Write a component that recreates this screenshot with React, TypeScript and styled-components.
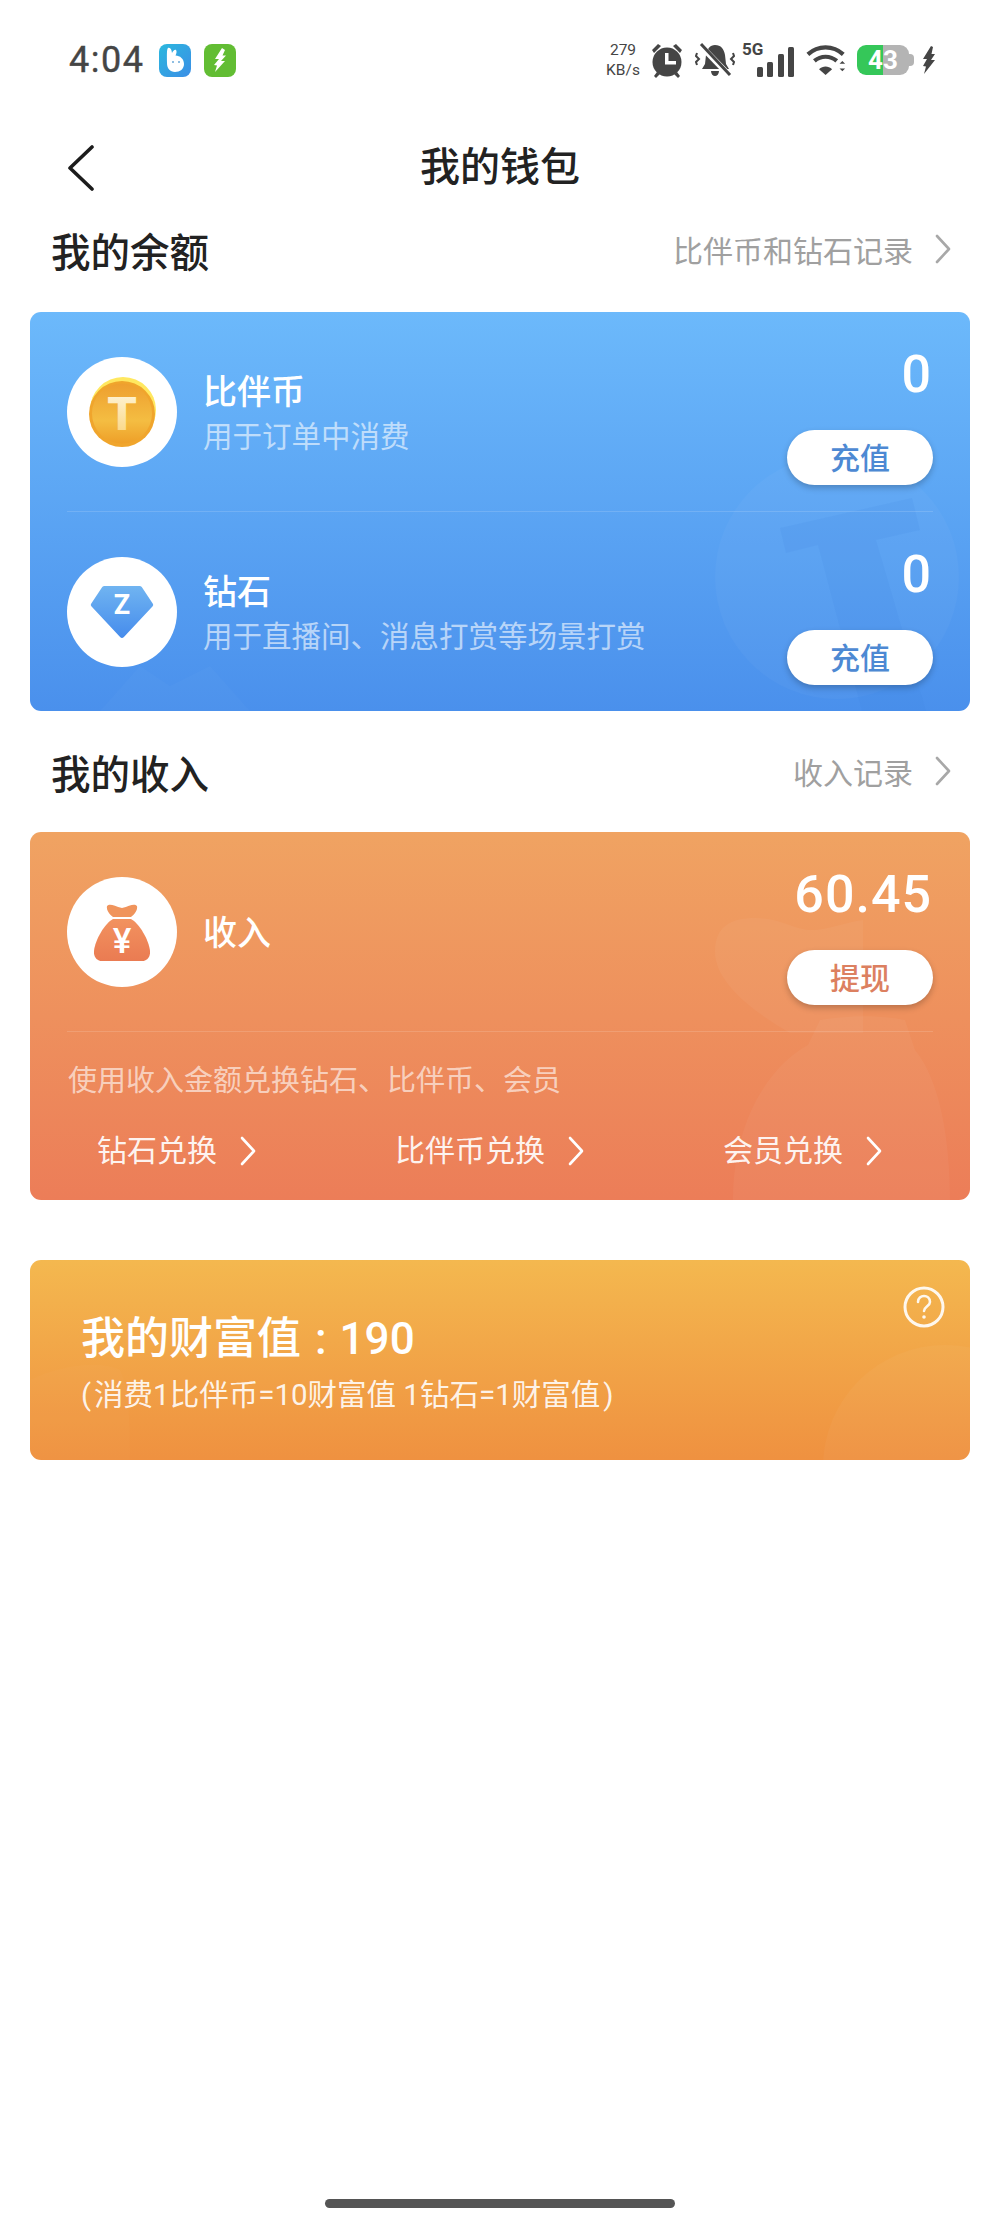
import React from "react";
import styled, { createGlobalStyle } from "styled-components";

const GlobalStyle = createGlobalStyle`
  html, body {
    margin: 0;
    background: #fff;
    font-family: "Roboto", "Noto Sans CJK SC", sans-serif;
  }
  * { box-sizing: border-box; }
`;

const Page = styled.div`
  width: 1000px;
  height: 2225px;
  display: flex;
  flex-direction: column;
  background: #fff;
  overflow: hidden;
`;

const StatusBar = styled.div`
  height: 120px;
  padding: 0 64px 0 69px;
  display: flex;
  align-items: center;
  color: #454545;
`;

const Time = styled.span`
  font-size: 36px;
  letter-spacing: 1.5px;
  margin-right: 15px;
  -webkit-text-stroke: 0.4px #454545;
`;

const AppBadge = styled.span<{ $bg: string }>`
  width: 32px;
  height: 33px;
  border-radius: 8px;
  background: ${(p) => p.$bg};
  margin-right: 13px;
  display: flex;
  align-items: center;
  justify-content: center;
`;

const StatusRight = styled.div`
  margin-left: auto;
  display: flex;
  align-items: center;
`;

const Speed = styled.div`
  font-size: 15.5px;
  line-height: 20px;
  text-align: center;
  width: 36px;
  margin-right: 10px;
  white-space: nowrap;
`;

const Alarm = styled.svg`
  margin-right: 12px;
`;

const Signal = styled.div`
  position: relative;
  width: 52px;
  height: 36px;
  margin-left: 7px;
  margin-right: 12px;
`;

const FiveG = styled.span`
  position: absolute;
  left: 0;
  top: -1px;
  font-size: 17px;
  font-weight: 700;
  line-height: 17px;
`;

const Battery = styled.div`
  position: relative;
  width: 52px;
  height: 30px;
  margin-left: 10px;
  margin-right: 13px;
  border-radius: 9px;
  background: linear-gradient(90deg, #35c759 0 50%, #b4b4b4 50%);
  color: #fff;
  font-size: 26px;
  font-weight: 700;
  line-height: 30px;
  text-align: center;

  &::after {
    content: "";
    position: absolute;
    right: -5px;
    top: 9px;
    width: 5px;
    height: 12px;
    border-radius: 0 4px 4px 0;
    background: #b4b4b4;
  }
`;

const NavBar = styled.div`
  height: 96px;
  padding-left: 67px;
  display: flex;
  align-items: center;
  position: relative;
`;

const NavTitle = styled.h1`
  position: absolute;
  left: 0;
  right: 0;
  top: 20px;
  margin: 0;
  text-align: center;
  font-size: 40px;
  font-weight: 500;
  line-height: 56px;
  color: #222;
`;

const SectionHead = styled.div`
  height: 66px;
  padding: 0 49px 0 51px;
  display: flex;
  align-items: center;
  justify-content: space-between;
`;

const SectionTitle = styled.h2`
  margin: 0;
  font-size: 39.5px;
  font-weight: 500;
  color: #222;
`;

const SectionLink = styled.div`
  display: flex;
  align-items: center;
  gap: 22px;
  font-size: 30px;
  color: #a0a0a0;
`;

const Card = styled.div<{ $from: string; $to: string; $height: number }>`
  position: relative;
  margin: 0 30px;
  height: ${(p) => p.$height}px;
  border-radius: 11px;
  overflow: hidden;
  color: #fff;
  background: linear-gradient(180deg, ${(p) => p.$from}, ${(p) => p.$to});
`;

const CardArt = styled.svg`
  position: absolute;
  inset: 0;
  width: 100%;
  height: 100%;
`;

const Row = styled.div<{ $divider?: boolean }>`
  position: relative;
  height: 200px;
  margin: 0 37px;
  padding-top: 45px;
  display: flex;
  border-bottom: ${(p) => (p.$divider ? "1px solid rgba(255,255,255,0.14)" : "none")};
`;

const Avatar = styled.div`
  width: 110px;
  height: 110px;
  border-radius: 50%;
  background: #fff;
  display: flex;
  align-items: center;
  justify-content: center;
  flex: none;
`;

const BagWrap = styled.div`
  position: relative;
  width: 56px;
  height: 58px;
`;

const BagSign = styled.span`
  position: absolute;
  left: 0;
  right: 0;
  top: 20px;
  text-align: center;
  color: #fff;
  font-size: 35px;
  font-weight: 500;
  line-height: 38px;
`;

const RowText = styled.div`
  margin-left: 26px;
  height: 110px;
  padding-top: 2px;
  flex: 1;
  display: flex;
  flex-direction: column;
  justify-content: center;
`;

const RowTitle = styled.div`
  font-size: 34px;
  font-weight: 500;
  line-height: 46px;
`;

const RowSub = styled.div`
  margin-top: 1px;
  font-size: 29.5px;
  line-height: 42px;
  color: rgba(255, 255, 255, 0.6);
  white-space: nowrap;
`;

const Side = styled.div`
  position: absolute;
  right: 0;
  top: 25px;
  display: flex;
  flex-direction: column;
  align-items: flex-end;
`;

const Amount = styled.div`
  height: 75px;
  font-size: 52px;
  font-weight: 500;
  line-height: 75px;
  letter-spacing: 1px;
  margin-right: 1px;
`;

const PillButton = styled.button<{ $color: string }>`
  width: 146px;
  height: 55px;
  margin-top: 18px;
  padding: 0 0 3px;
  border: none;
  border-radius: 28px;
  background: #fff;
  color: ${(p) => p.$color};
  font-family: inherit;
  font-size: 30px;
  font-weight: 500;
  box-shadow: 0 3px 6px rgba(0, 0, 0, 0.22);
`;

const ExchangeNote = styled.div`
  position: relative;
  margin: 0 38px;
  padding-top: 28px;
  font-size: 29px;
  line-height: 42px;
  color: rgba(255, 255, 255, 0.62);
`;

const ExchangeLinks = styled.div`
  position: relative;
  margin-top: 28px;
  padding: 0 88px 0 67px;
  display: flex;
  justify-content: space-between;
`;

const ExchangeLink = styled.div`
  display: flex;
  align-items: center;
  gap: 23px;
  font-size: 30px;
  line-height: 42px;
  color: rgba(255, 255, 255, 0.92);
`;

const Spacer = styled.div<{ $h: number }>`
  height: ${(p) => p.$h}px;
  flex: none;
`;

const WealthBody = styled.div`
  position: relative;
  padding: 47px 51px 0;
`;

const WealthTitle = styled.div`
  font-size: 44px;
  font-weight: 500;
  line-height: 64px;
  white-space: nowrap;
`;

const WealthColon = styled.span`
  margin: 0 13px 0 14px;
`;

const WealthSub = styled.div`
  margin-top: 3px;
  font-size: 29.5px;
  line-height: 42px;
  color: rgba(255, 255, 255, 0.9);
  white-space: nowrap;
`;

const Paren = styled.span<{ $side: "open" | "close" }>`
  margin: ${(p) => (p.$side === "open" ? "0 3px 0 0" : "0 0 0 3px")};
`;

const HelpIcon = styled.svg`
  position: absolute;
  right: 25px;
  top: 26px;
`;

const HomeBar = styled.div`
  width: 350px;
  height: 9px;
  margin: auto auto 17px;
  border-radius: 5px;
  background: #555;
`;

const Chevron = ({ color }: { color: string }) => (
  <svg width="16" height="30" viewBox="0 0 16 30" fill="none">
    <path d="M2 2l12 13L2 28" stroke={color} strokeWidth="2.6" strokeLinecap="round" strokeLinejoin="round" />
  </svg>
);

const Coin = () => (
  <svg width="70" height="72" viewBox="0 0 70 72">
    <defs>
      <linearGradient id="coinFace" x1="0" y1="0" x2="0" y2="1">
        <stop offset="0" stopColor="#ee9f2f" />
        <stop offset="0.62" stopColor="#f4bd42" />
        <stop offset="1" stopColor="#ee9f28" />
      </linearGradient>
      <linearGradient id="coinT" x1="0" y1="0" x2="0" y2="1">
        <stop offset="0" stopColor="#fff8e2" />
        <stop offset="1" stopColor="#f9d277" />
      </linearGradient>
    </defs>
    <circle cx="36" cy="34" r="33" fill="#ffe860" />
    <circle cx="35" cy="38" r="33" fill="#f0a52c" />
    <circle cx="35" cy="37.5" r="30" fill="url(#coinFace)" />
    <text x="35" y="54" textAnchor="middle" fontSize="47" fontWeight="900" fontFamily="Roboto, sans-serif" fill="url(#coinT)">T</text>
  </svg>
);

const Diamond = () => (
  <svg width="64" height="54" viewBox="0 0 66 56">
    <defs>
      <linearGradient id="gem" x1="0" y1="0" x2="0" y2="1">
        <stop offset="0" stopColor="#70b4f1" />
        <stop offset="1" stopColor="#468cec" />
      </linearGradient>
    </defs>
    <path d="M15 1h36a3 3 0 0 1 2.500 1.200L65 19.500a2 2 0 0 1-.2 2.500L35 54a3 3 0 0 1-4 0L1.200 22a2 2 0 0 1-.2-2.500L12.500 2.200A3 3 0 0 1 15 1z" fill="url(#gem)" />
    <text x="33" y="30" textAnchor="middle" fontSize="28" fontWeight="700" fontFamily="Roboto, sans-serif" fill="#fff">Z</text>
  </svg>
);

const MoneyBag = () => (
  <BagWrap>
    <svg width="56" height="58" viewBox="0 0 56 58">
      <defs>
        <linearGradient id="bag" x1="0" y1="0" x2="0" y2="1">
          <stop offset="0" stopColor="#f2925f" />
          <stop offset="1" stopColor="#ea7b52" />
        </linearGradient>
      </defs>
      <path d="M13 3c3-3 7 0 15 2 8-2 12-5 15-2 1 4-3 9-6 11H19c-3-2-7-7-6-11z" fill="#f0945c" />
      <path d="M19 16h18c8 4 18 21 19 32 .5 6-3 10-8 10H8c-5 0-8.500-4-8-10C1 37 11 20 19 16z" fill="url(#bag)" />
    </svg>
    <BagSign>¥</BagSign>
  </BagWrap>
);

const BunnyBadge = () => (
  <svg width="22" height="26" viewBox="0 0 22 26">
    <path d="M4 1c2.500-.8 3.500 1.500 4 5 1-2.500 3-4 4-3s.5 3.500-.5 5.500C16 8.500 20 12 20 17c0 5-4 8-9 8s-8-3.500-8-9C3 10 2.500 2 4 1z" fill="#fff" />
    <circle cx="9" cy="15" r="1" fill="#6aa9d8" />
    <circle cx="15" cy="15" r="1" fill="#6aa9d8" />
  </svg>
);

const BoltBadge = () => (
  <svg width="14" height="24" viewBox="0 0 14 24">
    <path d="M9 0L2 11h4L1 17l3 .5L2 24l10-11H8l5-5.500H9.500L12 2z" fill="#fff" />
  </svg>
);

const App = () => (
  <Page>
    <GlobalStyle />
    <StatusBar>
      <Time>4:04</Time>
      <AppBadge $bg="linear-gradient(135deg, #2bb8de, #3b8ee6)">
        <BunnyBadge />
      </AppBadge>
      <AppBadge $bg="#62bd33">
        <BoltBadge />
      </AppBadge>
      <StatusRight>
        <Speed>
          279
          <br />
          KB/s
        </Speed>
        <Alarm width="32" height="36" viewBox="0 0 32 36" fill="#454545">
          <circle cx="16" cy="20" r="14.500" />
          <path d="M1 8l6-6 3 2-7 7zM31 8l-6-6-3 2 7 7zM6 30l-3 4 2 2 4-4zM26 30l3 4-2 2-4-4z" />
          <path d="M14 11h3.500v8H25v3.500H14z" fill="#fff" />
        </Alarm>
        <svg width="40" height="36" viewBox="0 0 40 36" fill="#454545">
          <path d="M20 3c6 0 9 4 10 10l1 9 3 5H7l3-5 1-9c1-6 4-10 9-10zM16 29h8c0 3-2 5-4 5s-4-2-4-5z" />
          <path d="M5 3l30 31" stroke="#fff" strokeWidth="6" />
          <path d="M6 2l29 31" stroke="#454545" strokeWidth="3" />
          <path d="M2 11l-1 3 3 3-3 3 1 3M38 11l1 3-3 3 3 3-1 3" fill="none" stroke="#454545" strokeWidth="2" />
        </svg>
        <Signal>
          <FiveG>5G</FiveG>
          <svg width="52" height="36" viewBox="0 0 52 36" fill="#454545">
            <rect x="15" y="25" width="6" height="10" rx="1.500" />
            <rect x="25" y="20" width="6" height="15" rx="1.500" />
            <rect x="36" y="12" width="6" height="23" rx="1.500" />
            <rect x="46" y="5" width="6" height="30" rx="1.500" />
          </svg>
        </Signal>
        <svg width="41" height="30" viewBox="0 0 44 32" fill="none" stroke="#454545" strokeWidth="4.500">
          <path d="M2 10c11-10 27-10 38 0" />
          <path d="M9 17c7-6 17-6 24 0" />
          <path d="M14 26l7 6 7-6c-4-4-10-4-14 0z" fill="#454545" stroke="none" />
          <path d="M36 20l3-3 3 3zM36 25l3 3 3-3z" fill="#454545" stroke="none" />
        </svg>
        <Battery>43</Battery>
        <svg width="14" height="28" viewBox="0 0 14 28" fill="#454545">
          <path d="M9 0L1 13h4L1 20l3 .5L2 28l11-14H9l4-6H9.500L11 1z" />
        </svg>
      </StatusRight>
    </StatusBar>

    <NavBar>
      <svg width="28" height="46" viewBox="0 0 28 46" fill="none">
        <path d="M25 2L3 23l22 21" stroke="#1c1c1c" strokeWidth="3.600" strokeLinecap="round" strokeLinejoin="round" />
      </svg>
      <NavTitle>我的钱包</NavTitle>
    </NavBar>

    <SectionHead>
      <SectionTitle>我的余额</SectionTitle>
      <SectionLink>
        比伴币和钻石记录
        <Chevron color="#a8a8a8" />
      </SectionLink>
    </SectionHead>
    <Spacer $h={30} />

    <Card $from="#6cb9fb" $to="#4a90ec" $height={399}>
      <CardArt viewBox="0 0 940 399">
        <circle cx="807" cy="265" r="122" fill="#fff" opacity="0.03" />
        <path d="M750 216l132-30 8 32-44 10 50 171h-64l-44-166-32 8z" fill="#3f86e2" opacity="0.13" />
        <path d="M70 399l40-45 30 20 40-20 40 45z" fill="#fff" opacity="0.02" />
      </CardArt>
      <Row $divider>
        <Avatar>
          <Coin />
        </Avatar>
        <RowText>
          <RowTitle>比伴币</RowTitle>
          <RowSub>用于订单中消费</RowSub>
        </RowText>
        <Side>
          <Amount>0</Amount>
          <PillButton $color="#4d89d3">充值</PillButton>
        </Side>
      </Row>
      <Row>
        <Avatar>
          <Diamond />
        </Avatar>
        <RowText>
          <RowTitle>钻石</RowTitle>
          <RowSub>用于直播间、消息打赏等场景打赏</RowSub>
        </RowText>
        <Side>
          <Amount>0</Amount>
          <PillButton $color="#4d89d3">充值</PillButton>
        </Side>
      </Row>
    </Card>

    <Spacer $h={27} />
    <SectionHead>
      <SectionTitle>我的收入</SectionTitle>
      <SectionLink>
        收入记录
        <Chevron color="#a8a8a8" />
      </SectionLink>
    </SectionHead>
    <Spacer $h={28} />

    <Card $from="#f0a362" $to="#ec7d58" $height={368}>
      <CardArt viewBox="0 0 940 368">
        <path d="M685 120c0-25 15-34 40-34 25 0 40 12 55 12 20 0 35-8 53-10v113H760c-35-20-75-50-75-81z" fill="#fff" opacity="0.04" />
        <path d="M790 188c30-5 60-5 85 0l10 30c25 30 35 90 35 150H703c0-70 30-130 75-155z" fill="#fff" opacity="0.04" />
      </CardArt>
      <Row $divider>
        <Avatar>
          <MoneyBag />
        </Avatar>
        <RowText>
          <RowTitle>收入</RowTitle>
        </RowText>
        <Side>
          <Amount>60.45</Amount>
          <PillButton $color="#dc8060">提现</PillButton>
        </Side>
      </Row>
      <ExchangeNote>使用收入金额兑换钻石、比伴币、会员</ExchangeNote>
      <ExchangeLinks>
        <ExchangeLink>
          钻石兑换
          <Chevron color="#fff" />
        </ExchangeLink>
        <ExchangeLink>
          比伴币兑换
          <Chevron color="#fff" />
        </ExchangeLink>
        <ExchangeLink>
          会员兑换
          <Chevron color="#fff" />
        </ExchangeLink>
      </ExchangeLinks>
    </Card>

    <Spacer $h={60} />

    <Card $from="#f4b84f" $to="#ef9140" $height={200}>
      <CardArt viewBox="0 0 940 200">
        <circle cx="915" cy="207" r="122" fill="#fff" opacity="0.035" />
        <path d="M0 120c30-15 70-20 90-10 10 20 10 60 10 90H0z" fill="#fff" opacity="0.02" />
      </CardArt>
      <WealthBody>
        <WealthTitle>
          我的财富值<WealthColon>:</WealthColon>190
        </WealthTitle>
        <WealthSub>
          <Paren $side="open">(</Paren>消费1比伴币=10财富值 1钻石=1财富值<Paren $side="close">)</Paren>
        </WealthSub>
      </WealthBody>
      <HelpIcon width="42" height="42" viewBox="0 0 42 42" fill="none">
        <circle cx="21" cy="21" r="19" stroke="#fff" strokeWidth="3" opacity="0.9" />
        <path d="M15 16c0-4 3-6 6-6s6 2 6 6c0 4-6 4.500-6 9" stroke="#fff" strokeWidth="2.600" strokeLinecap="round" opacity="0.9" />
        <circle cx="21" cy="31" r="1.800" fill="#fff" opacity="0.9" />
      </HelpIcon>
    </Card>

    <HomeBar />
  </Page>
);

export default App;
